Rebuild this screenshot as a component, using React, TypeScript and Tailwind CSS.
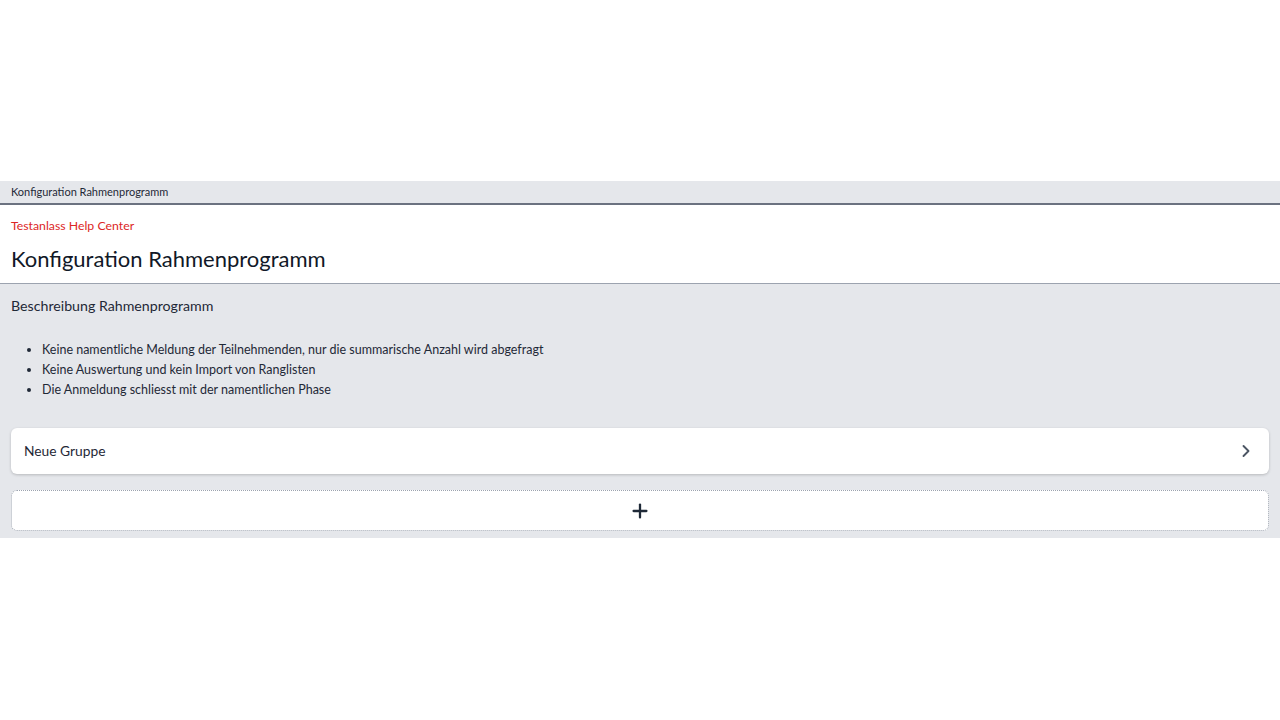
import { ChevronRight, Plus } from "lucide-react";

const points = [
  "Keine namentliche Meldung der Teilnehmenden, nur die summarische Anzahl wird abgefragt",
  "Keine Auswertung und kein Import von Ranglisten",
  "Die Anmeldung schliesst mit der namentlichen Phase",
];

export default function App() {
  return (
    <div className="min-h-[720px] bg-white font-['Lato',sans-serif] text-[#1f2937]">
      <div className="h-[181px]" />

      <div className="bg-[#e5e7eb] border-b-2 border-[#6b7280] px-[11px] h-[24px] flex items-center text-[11px]">
        Konfiguration Rahmenprogramm
      </div>

      <div className="px-[11px] pt-[11px] pb-[9px] border-b border-[#9ca3af]">
        <p className="text-[12.3px] leading-[20px] text-[#dc2626]">Testanlass Help Center</p>
        <h1 className="mt-[8px] text-[22px] leading-[30px] text-[#111827]">Konfiguration Rahmenprogramm</h1>
      </div>

      <div className="bg-[#e5e7eb] px-[11px] pt-[12px] pb-[7px]">
        <h2 className="text-[14.2px] leading-[20px]">Beschreibung Rahmenprogramm</h2>
        <ul className="mt-[24px] pl-[31px] list-disc text-[12.5px] leading-[20px]">
          {points.map((p) => (
            <li key={p}>{p}</li>
          ))}
        </ul>

        <div className="mt-[28px] bg-white rounded-md shadow-[0_1px_3px_rgba(0,0,0,0.2)] h-[46px] px-[13px] flex items-center justify-between">
          <span className="text-[13.8px]">Neue Gruppe</span>
          <ChevronRight className="h-[20px] w-[20px] text-[#4b5563]" strokeWidth={2.25} />
        </div>

        <div className="mt-[16px] bg-white rounded-md border border-dotted border-[#9ca3af] h-[41px] flex items-center justify-center">
          <Plus className="h-[22px] w-[22px] text-[#1f2937]" strokeWidth={2.5} />
        </div>
      </div>
    </div>
  );
}
